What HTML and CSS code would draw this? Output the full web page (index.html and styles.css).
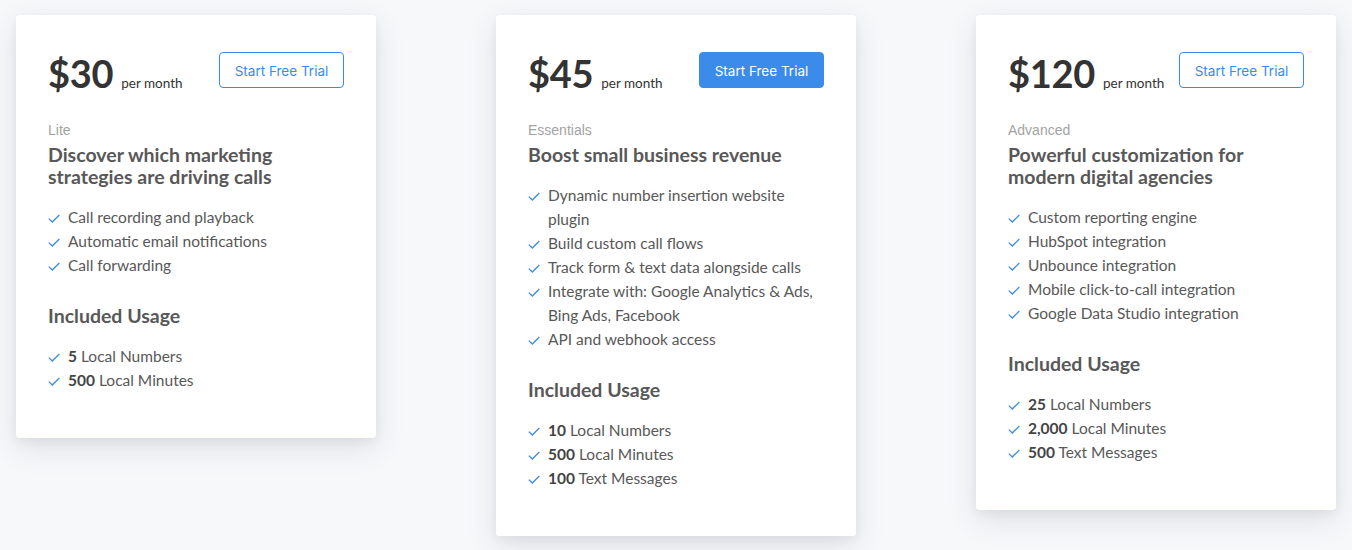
FILE: index.html
```html
<!DOCTYPE html>
<html lang="en">
<head>
<meta charset="utf-8">
<title>Pricing</title>
<link rel="stylesheet" href="styles.css">
</head>
<body>
<main class="plans">
  <section class="card">
    <div class="top">
      <div class="price"><span class="amount">$30</span><span class="per">per month</span></div>
      <a class="btn">Start Free Trial</a>
    </div>
    <div class="tier">Lite</div>
    <h2 class="title">Discover which marketing strategies are driving calls</h2>
    <ul class="list">
      <li><svg class="chk" viewBox="0 0 12 9"><path d="M0.8 4.6 L4.3 8 L11.3 1"/></svg><span>Call recording and playback</span></li>
      <li><svg class="chk" viewBox="0 0 12 9"><path d="M0.8 4.6 L4.3 8 L11.3 1"/></svg><span>Automatic email notifications</span></li>
      <li><svg class="chk" viewBox="0 0 12 9"><path d="M0.8 4.6 L4.3 8 L11.3 1"/></svg><span>Call forwarding</span></li>
    </ul>
    <h3 class="usage">Included Usage</h3>
    <ul class="list">
      <li><svg class="chk" viewBox="0 0 12 9"><path d="M0.8 4.6 L4.3 8 L11.3 1"/></svg><span><b>5</b> Local Numbers</span></li>
      <li><svg class="chk" viewBox="0 0 12 9"><path d="M0.8 4.6 L4.3 8 L11.3 1"/></svg><span><b>500</b> Local Minutes</span></li>
    </ul>
  </section>

  <section class="card">
    <div class="top">
      <div class="price"><span class="amount">$45</span><span class="per">per month</span></div>
      <a class="btn primary">Start Free Trial</a>
    </div>
    <div class="tier">Essentials</div>
    <h2 class="title">Boost small business revenue</h2>
    <ul class="list">
      <li><svg class="chk" viewBox="0 0 12 9"><path d="M0.8 4.6 L4.3 8 L11.3 1"/></svg><span>Dynamic number insertion website plugin</span></li>
      <li><svg class="chk" viewBox="0 0 12 9"><path d="M0.8 4.6 L4.3 8 L11.3 1"/></svg><span>Build custom call flows</span></li>
      <li><svg class="chk" viewBox="0 0 12 9"><path d="M0.8 4.6 L4.3 8 L11.3 1"/></svg><span>Track form &amp; text data alongside calls</span></li>
      <li><svg class="chk" viewBox="0 0 12 9"><path d="M0.8 4.6 L4.3 8 L11.3 1"/></svg><span>Integrate with: Google Analytics &amp; Ads, Bing Ads, Facebook</span></li>
      <li><svg class="chk" viewBox="0 0 12 9"><path d="M0.8 4.6 L4.3 8 L11.3 1"/></svg><span>API and webhook access</span></li>
    </ul>
    <h3 class="usage">Included Usage</h3>
    <ul class="list">
      <li><svg class="chk" viewBox="0 0 12 9"><path d="M0.8 4.6 L4.3 8 L11.3 1"/></svg><span><b>10</b> Local Numbers</span></li>
      <li><svg class="chk" viewBox="0 0 12 9"><path d="M0.8 4.6 L4.3 8 L11.3 1"/></svg><span><b>500</b> Local Minutes</span></li>
      <li><svg class="chk" viewBox="0 0 12 9"><path d="M0.8 4.6 L4.3 8 L11.3 1"/></svg><span><b>100</b> Text Messages</span></li>
    </ul>
  </section>

  <section class="card">
    <div class="top">
      <div class="price"><span class="amount">$120</span><span class="per">per month</span></div>
      <a class="btn">Start Free Trial</a>
    </div>
    <div class="tier">Advanced</div>
    <h2 class="title">Powerful customization for modern digital agencies</h2>
    <ul class="list">
      <li><svg class="chk" viewBox="0 0 12 9"><path d="M0.8 4.6 L4.3 8 L11.3 1"/></svg><span>Custom reporting engine</span></li>
      <li><svg class="chk" viewBox="0 0 12 9"><path d="M0.8 4.6 L4.3 8 L11.3 1"/></svg><span>HubSpot integration</span></li>
      <li><svg class="chk" viewBox="0 0 12 9"><path d="M0.8 4.6 L4.3 8 L11.3 1"/></svg><span>Unbounce integration</span></li>
      <li><svg class="chk" viewBox="0 0 12 9"><path d="M0.8 4.6 L4.3 8 L11.3 1"/></svg><span>Mobile click-to-call integration</span></li>
      <li><svg class="chk" viewBox="0 0 12 9"><path d="M0.8 4.6 L4.3 8 L11.3 1"/></svg><span>Google Data Studio integration</span></li>
    </ul>
    <h3 class="usage">Included Usage</h3>
    <ul class="list">
      <li><svg class="chk" viewBox="0 0 12 9"><path d="M0.8 4.6 L4.3 8 L11.3 1"/></svg><span><b>25</b> Local Numbers</span></li>
      <li><svg class="chk" viewBox="0 0 12 9"><path d="M0.8 4.6 L4.3 8 L11.3 1"/></svg><span><b>2,000</b> Local Minutes</span></li>
      <li><svg class="chk" viewBox="0 0 12 9"><path d="M0.8 4.6 L4.3 8 L11.3 1"/></svg><span><b>500</b> Text Messages</span></li>
    </ul>
  </section>
</main>
</body>
</html>
```

FILE: styles.css
```css
* { box-sizing: border-box; }
html, body { margin: 0; padding: 0; }
body {
  background: #f7f8fa;
  font-family: Lato, "Noto Sans", sans-serif;
  color: #555;
  height: 550px;
  overflow: hidden;
}
.plans {
  display: flex;
  align-items: flex-start;
  gap: 120px;
  padding: 15px 16px 0;
}
.card {
  width: 360px;
  flex: none;
  background: #fff;
  border-radius: 3px;
  box-shadow: 0 10px 30px rgba(40, 50, 80, 0.12), 0 3px 8px rgba(40, 50, 80, 0.06);
  padding: 37px 32px 46px;
}
.top {
  display: flex;
  justify-content: space-between;
  align-items: center;
  height: 36px;
}
.price {
  display: flex;
  align-items: baseline;
  margin-top: 5px;
}
.amount {
  font-size: 38px;
  font-weight: 700;
  color: #333;
  line-height: 40px;
  letter-spacing: -0.3px;
}
.per {
  font-size: 13.5px;
  color: #333;
  margin-left: 8px;
}
.btn {
  display: flex;
  align-items: center;
  justify-content: center;
  width: 125px;
  height: 36px;
  padding-top: 1px;
  border: 1px solid #3a8bea;
  border-radius: 4px;
  color: #3a8bea;
  font-family: Inter, "Liberation Sans", sans-serif;
  font-size: 13.5px;
  cursor: pointer;
}
.btn.primary {
  background: #3a8bea;
  color: #fff;
}
.tier {
  margin-top: 32px;
  font-family: "Liberation Sans", Arial, sans-serif;
  font-size: 14px;
  line-height: 20px;
  color: #a3a3a3;
}
.title {
  margin: 4px 0 0;
  font-size: 19.5px;
  line-height: 22px;
  font-weight: 700;
  color: #585858;
}
.list {
  list-style: none;
  margin: 17px 0 0;
  padding: 0;
  font-size: 15.5px;
  line-height: 24px;
  color: #585858;
}
.list li {
  display: flex;
  align-items: flex-start;
}
.chk {
  flex: none;
  width: 12px;
  height: 9px;
  margin: 9px 8px 0 0;
  fill: none;
  stroke: #3a8bea;
  stroke-width: 1.3;
}
.list b {
  font-weight: 700;
  color: #444;
}
.usage {
  margin: 27px 0 0;
  font-size: 19.5px;
  line-height: 24px;
  font-weight: 700;
  color: #585858;
}
.usage + .list {
  margin-top: 16px;
}
```
